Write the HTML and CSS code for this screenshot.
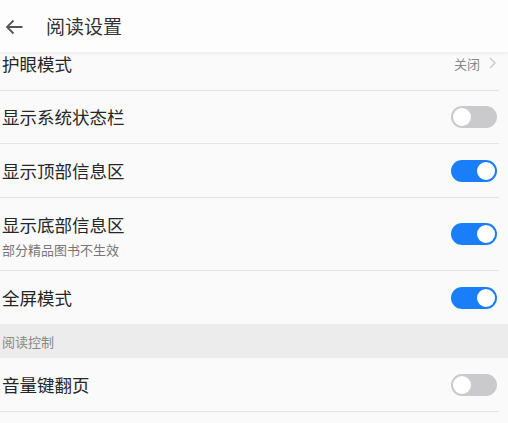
FILE: index.html
```html
<!DOCTYPE html>
<html lang="zh-CN">
<head>
<meta charset="utf-8">
<title>阅读设置</title>
<link rel="stylesheet" href="styles.css">
</head>
<body>
<header class="topbar">
  <svg class="back" width="18" height="16" viewBox="0 0 18 16" aria-hidden="true">
    <path d="M17.5 8H2M8.5 1.5L2 8l6.5 6.5" fill="none" stroke="#555" stroke-width="1.8"/>
  </svg>
  <h1 class="title">阅读设置</h1>
</header>
<main class="list">
  <div class="row">
    <span class="label">护眼模式</span>
    <span class="value">关闭<svg class="chev" width="7" height="12" viewBox="0 0 7 12"><path d="M1 1l5 5-5 5" fill="none" stroke="#c8c8c8" stroke-width="1.2"/></svg></span>
  </div>
  <div class="row">
    <span class="label">显示系统状态栏</span>
    <span class="toggle"><span class="knob"></span></span>
  </div>
  <div class="row r54">
    <span class="label">显示顶部信息区</span>
    <span class="toggle on"><span class="knob"></span></span>
  </div>
  <div class="row tall">
    <div class="texts">
      <span class="label">显示底部信息区</span>
      <span class="sub">部分精品图书不生效</span>
    </div>
    <span class="toggle on"><span class="knob"></span></span>
  </div>
  <div class="row last">
    <span class="label">全屏模式</span>
    <span class="toggle on"><span class="knob"></span></span>
  </div>
  <div class="section">阅读控制</div>
  <div class="row r54">
    <span class="label">音量键翻页</span>
    <span class="toggle"><span class="knob"></span></span>
  </div>
</main>
</body>
</html>
```
FILE: styles.css
```css
html, body {
  margin: 0;
  padding: 0;
  background: #fafafa;
  font-family: "Noto Sans CJK SC", "Noto Sans", sans-serif;
  color: #222;
}
.topbar {
  position: relative;
  z-index: 2;
  height: 52px;
  background: #fdfdfd;
  display: flex;
  align-items: center;
  box-shadow: 0 1px 4px rgba(0,0,0,0.08);
}
.back {
  margin-left: 5px;
  margin-top: 2px;
}
.title {
  margin: 0 0 0 23px;
  font-size: 19px;
  font-weight: normal;
  color: #333;
  line-height: 1;
  padding-bottom: 2px;
}
.list {
  margin-top: -14px;
  position: relative;
  z-index: 1;
}
.row {
  box-sizing: border-box;
  height: 53px;
  margin-right: 9px;
  padding: 0 2px 0 2px;
  display: flex;
  align-items: center;
  justify-content: space-between;
  border-bottom: 1px solid #e4e4e4;
}
.row.r54 {
  height: 54px;
}
.row.tall {
  height: 73px;
}
.row.last {
  border-bottom: none;
  height: 53px;
}
.label {
  font-size: 17.5px;
  line-height: 1;
  color: #262626;
}
.texts {
  display: flex;
  flex-direction: column;
  gap: 9px;
  padding-top: 4px;
}
.sub {
  font-size: 13px;
  line-height: 1;
  color: #777;
}
.value {
  display: flex;
  align-items: center;
  gap: 9px;
  font-size: 13px;
  color: #888;
  margin-right: 1px;
  margin-top: -2px;
}
.toggle {
  box-sizing: border-box;
  width: 46px;
  height: 22px;
  border-radius: 11px;
  background: #cacacc;
  padding: 2px;
  display: flex;
  justify-content: flex-start;
}
.toggle.on {
  background: #1a7ef8;
  justify-content: flex-end;
}
.knob {
  width: 18px;
  height: 18px;
  border-radius: 50%;
  background: #fff;
}
.section {
  height: 34px;
  background: #ececec;
  padding-left: 2px;
  display: flex;
  align-items: center;
  font-size: 13px;
  color: #888;
}
```
